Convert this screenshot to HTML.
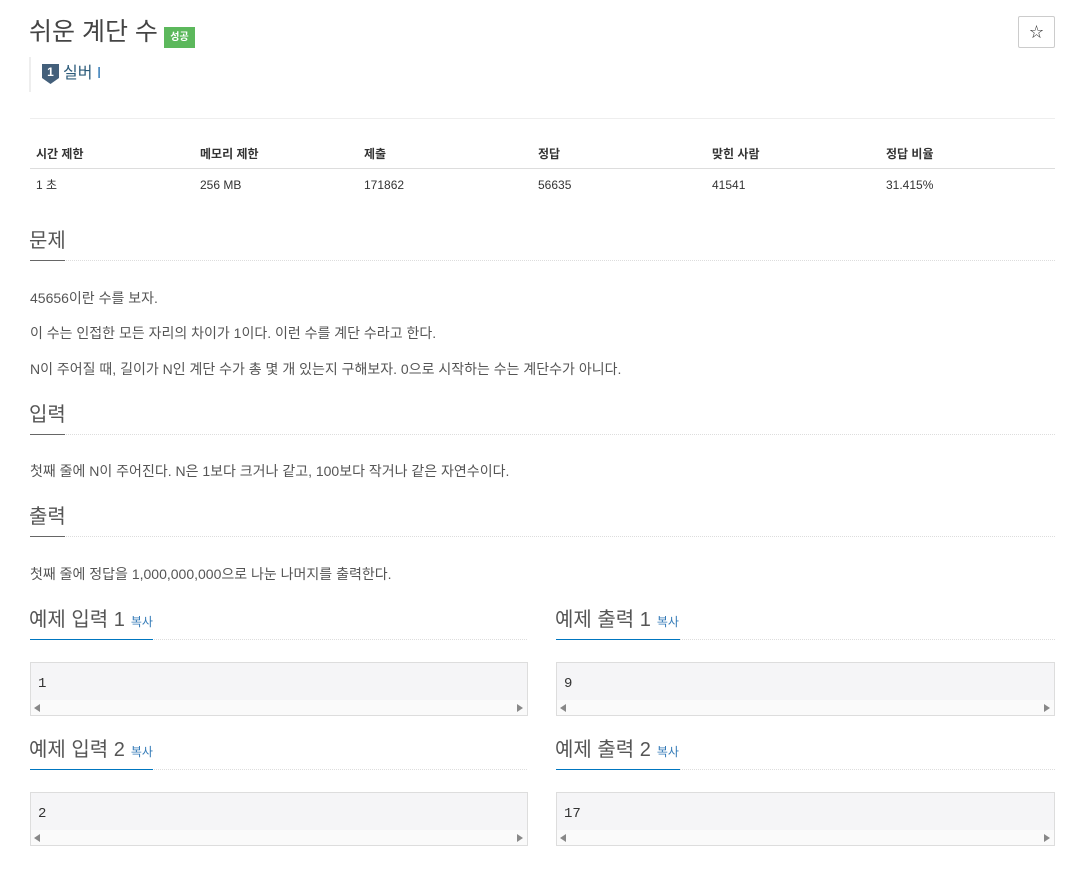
<!DOCTYPE html>
<html><head><meta charset="utf-8"><style>
body{margin:0;background:#fff;font-family:"Liberation Sans","Noto Sans CJK KR",sans-serif;color:#333;width:1085px;height:871px;overflow:hidden;position:relative}
.a{position:absolute}
.h{font-size:20px;color:#555;line-height:20px}
.ul{position:absolute;height:1px;background:#ccc}
.dot{position:absolute;height:0;border-top:1px dotted #ddd}
p{position:absolute;margin:0;font-size:14px;color:#555;line-height:16px}
.th{position:absolute;top:146px;font-size:12px;font-weight:bold;color:#333;line-height:16px}
.td{position:absolute;top:177px;font-size:12px;color:#333;line-height:16px}
.box{position:absolute;width:496px;height:52px;border:1px solid #ddd;background:#f5f5f7}
.box .sb{position:absolute;left:0;right:0;bottom:0;height:15px;background:#fafafa}
.box .t{position:absolute;left:7px;top:13px;font-family:"Liberation Mono",monospace;font-size:14px;color:#333}
.l{position:absolute;left:3px;bottom:3px;width:0;height:0;border-top:4px solid transparent;border-bottom:4px solid transparent;border-right:6px solid #888}
.r{position:absolute;right:4px;bottom:3px;width:0;height:0;border-top:4px solid transparent;border-bottom:4px solid transparent;border-left:6px solid #888}
.cp{font-size:12px;color:#337ab7;margin-left:6px}
.bl{position:absolute;height:1px;background:#0076c0}
</style></head><body>
<div class="a" style="left:29px;top:16px;font-size:25px;color:#444;line-height:32px">쉬운 계단 수</div>
<div class="a" style="left:164px;top:27px;width:31px;height:21px;background:#5cb85c;color:#fff;font-size:10px;font-weight:bold;text-align:center;line-height:21px">성공</div>
<div class="a" style="left:1018px;top:16px;width:35px;height:30px;border:1px solid #ccc;border-radius:2px;text-align:center;line-height:30px;font-size:14px;color:#333">☆</div>
<div class="a" style="left:29px;top:57px;width:2px;height:35px;background:#eee"></div>
<svg class="a" style="left:42px;top:64px" width="17" height="20" viewBox="0 0 17 20"><path d="M0 0H17V14L8.5 20L0 14Z" fill="#435f7a"/><text x="8.5" y="12" font-size="12" font-weight="bold" fill="#fff" text-anchor="middle" font-family="Liberation Sans">1</text></svg>
<div class="a" style="left:63px;top:64px;font-size:16px;color:#2c5b7a;line-height:20px">실버 <span style="color:#337ab7">I</span></div>
<div class="ul" style="left:30px;width:1025px;top:118px;background:#eee"></div>
<div class="th" style="left:36px">시간 제한</div><div class="th" style="left:200px">메모리 제한</div><div class="th" style="left:364px">제출</div><div class="th" style="left:538px">정답</div><div class="th" style="left:712px">맞힌 사람</div><div class="th" style="left:886px">정답 비율</div>
<div class="ul" style="left:30px;width:1025px;top:168px;background:#ddd"></div>
<div class="td" style="left:36px">1 초</div><div class="td" style="left:200px">256 MB</div><div class="td" style="left:364px">171862</div><div class="td" style="left:538px">56635</div><div class="td" style="left:712px">41541</div><div class="td" style="left:886px">31.415%</div>

<div class="a h" style="left:29px;top:231px">문제</div>
<div class="dot" style="left:30px;width:1025px;top:260px"></div><div class="ul" style="left:30px;width:35px;top:260px;background:#666"></div>
<p style="left:30px;top:290px">45656이란 수를 보자.</p>
<p style="left:30px;top:325px">이 수는 인접한 모든 자리의 차이가 1이다. 이런 수를 계단 수라고 한다.</p>
<p style="left:30px;top:361px">N이 주어질 때, 길이가 N인 계단 수가 총 몇 개 있는지 구해보자. 0으로 시작하는 수는 계단수가 아니다.</p>

<div class="a h" style="left:29px;top:405px">입력</div>
<div class="dot" style="left:30px;width:1025px;top:434px"></div><div class="ul" style="left:30px;width:35px;top:434px;background:#666"></div>
<p style="left:30px;top:463px">첫째 줄에 N이 주어진다. N은 1보다 크거나 같고, 100보다 작거나 같은 자연수이다.</p>

<div class="a h" style="left:29px;top:507px">출력</div>
<div class="dot" style="left:30px;width:1025px;top:536px"></div><div class="ul" style="left:30px;width:35px;top:536px;background:#666"></div>
<p style="left:30px;top:566px">첫째 줄에 정답을 1,000,000,000으로 나눈 나머지를 출력한다.</p>

<div class="a h" style="left:29px;top:610px">예제 입력 1<span class="cp">복사</span></div>
<div class="dot" style="left:30px;width:497px;top:639px"></div><div class="bl" style="left:30px;width:123px;top:639px"></div>
<div class="box" style="left:30px;top:662px"><div class="t">1</div><div class="sb"><div class="l"></div><div class="r"></div></div></div>
<div class="a h" style="left:555px;top:610px">예제 출력 1<span class="cp">복사</span></div>
<div class="dot" style="left:556px;width:499px;top:639px"></div><div class="bl" style="left:556px;width:124px;top:639px"></div>
<div class="box" style="left:556px;top:662px;width:497px"><div class="t">9</div><div class="sb"><div class="l"></div><div class="r"></div></div></div>

<div class="a h" style="left:29px;top:740px">예제 입력 2<span class="cp">복사</span></div>
<div class="dot" style="left:30px;width:497px;top:769px"></div><div class="bl" style="left:30px;width:123px;top:769px"></div>
<div class="box" style="left:30px;top:792px"><div class="t">2</div><div class="sb"><div class="l"></div><div class="r"></div></div></div>
<div class="a h" style="left:555px;top:740px">예제 출력 2<span class="cp">복사</span></div>
<div class="dot" style="left:556px;width:499px;top:769px"></div><div class="bl" style="left:556px;width:124px;top:769px"></div>
<div class="box" style="left:556px;top:792px;width:497px"><div class="t">17</div><div class="sb"><div class="l"></div><div class="r"></div></div></div>
</body></html>
